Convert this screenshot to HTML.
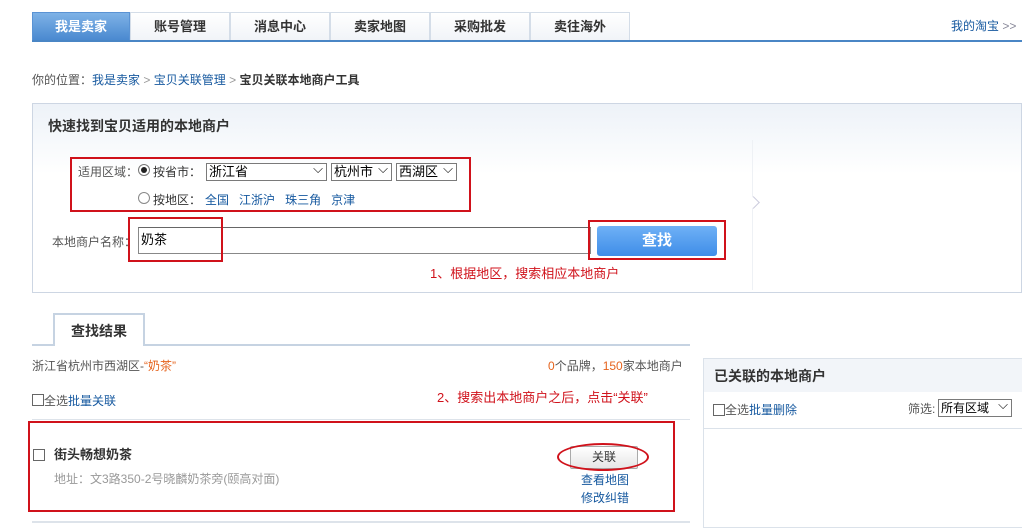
<!DOCTYPE html>
<html><head><meta charset="utf-8">
<style>
*{margin:0;padding:0;box-sizing:border-box}
body{width:1022px;height:525px;overflow:hidden;background:#fff;position:relative;font-family:"Liberation Sans","Noto Sans CJK SC","WenQuanYi Zen Hei",sans-serif;font-size:12px;color:#333}
.a{position:absolute;white-space:nowrap;line-height:14px}
.tab{position:absolute;top:12px;height:28px;width:100px;border:1px solid #d4dde8;border-bottom:none;background:linear-gradient(#fff,#f1f4f8);text-align:center;line-height:27px;font-size:13px;font-weight:bold;color:#333}
.lk{color:#15589f}
.red{border:2px solid #d0121b;position:absolute}
.sel{position:absolute;top:163px;height:18px;border:1px solid #7a7a7a;background:#fff;font-size:13px;line-height:16px;padding-left:2px;color:#000}
.sel:after{content:"⌵";position:absolute;right:3px;top:-3px;font-size:13px}
.cb{position:absolute;width:12px;height:12px;border:1px solid #666;background:#fff}
</style></head><body>
<div class="tab" style="left:32px;width:98px;background:linear-gradient(#7eb2e6,#4a89d0);color:#fff;border-color:#5a93d4">我是卖家</div>
<div class="tab" style="left:130px">账号管理</div>
<div class="tab" style="left:230px">消息中心</div>
<div class="tab" style="left:330px">卖家地图</div>
<div class="tab" style="left:430px">采购批发</div>
<div class="tab" style="left:530px">卖往海外</div>
<div class="a" style="left:32px;top:40px;width:990px;height:2px;background:#4a86c5"></div>
<div class="a lk" style="left:951px;top:19px;font-size:12px">我的淘宝 <span style="color:#889">&gt;&gt;</span></div>

<div class="a" style="left:32px;top:73px;color:#555">你的位置：<span class="lk">我是卖家</span> <span style="color:#999">&gt;</span> <span class="lk">宝贝关联管理</span> <span style="color:#999">&gt;</span> <b style="color:#333">宝贝关联本地商户工具</b></div>

<div class="a" style="left:32px;top:103px;width:990px;height:190px;border:1px solid #cdd6e3;background:linear-gradient(#edf2f8,#fff 70px)"></div>
<div class="a" style="left:752px;top:140px;width:1px;height:150px;background:#eef1f5"></div>
<div class="a" style="left:749px;top:198px;width:9px;height:9px;border-right:1px solid #ccd;border-top:1px solid #ccd;transform:rotate(45deg);background:#fff"></div>
<div class="a" style="left:48px;top:119px;font-size:14px;font-weight:bold;color:#333">快速找到宝贝适用的本地商户</div>

<div class="red" style="left:70px;top:157px;width:401px;height:55px"></div>
<div class="a" style="left:78px;top:165px;color:#555">适用区域：</div>
<div class="a" style="left:138px;top:164px;width:12px;height:12px;border:1px solid #777;border-radius:50%;background:#fff"><div style="margin:2px;width:6px;height:6px;border-radius:50%;background:#222"></div></div>
<div class="a" style="left:153px;top:165px">按省市：</div>
<div class="sel" style="left:206px;width:121px">浙江省</div>
<div class="sel" style="left:331px;width:61px">杭州市</div>
<div class="sel" style="left:396px;width:61px">西湖区</div>
<div class="a" style="left:138px;top:192px;width:12px;height:12px;border:1px solid #888;border-radius:50%;background:#fff"></div>
<div class="a" style="left:153px;top:193px">按地区：<span class="lk" style="margin-left:4px">全国</span>&nbsp;&nbsp;&nbsp;<span class="lk">江浙沪</span>&nbsp;&nbsp;&nbsp;<span class="lk">珠三角</span>&nbsp;&nbsp;&nbsp;<span class="lk">京津</span></div>

<div class="a" style="left:52px;top:235px;color:#555">本地商户名称：</div>
<div class="a" style="left:138px;top:227px;width:453px;height:27px;border:1px solid #888;border-top-color:#666;background:#fff;font-size:13px;padding:5px 0 0 2px;color:#000">奶茶</div>
<div class="red" style="left:128px;top:217px;width:95px;height:45px"></div>
<div class="a" style="left:597px;top:226px;width:120px;height:30px;border-radius:3px;background:linear-gradient(#6fb1f6,#3f8de8);color:#fff;font-size:15px;font-weight:bold;text-align:center;line-height:30px">查找</div>
<div class="red" style="left:588px;top:220px;width:138px;height:40px"></div>
<div class="a" style="left:430px;top:267px;color:#d0121b;font-size:13px">1、根据地区，搜索相应本地商户</div>

<div class="a" style="left:32px;top:344px;width:658px;height:2px;background:#c6d3e2"></div>
<div class="a" style="left:53px;top:313px;width:92px;height:33px;border:2px solid #c6d3e2;border-bottom:none;background:#fff;text-align:center;line-height:32px;font-size:14px;font-weight:bold">查找结果</div>
<div class="a" style="left:32px;top:359px;color:#555">浙江省杭州市西湖区-<span style="color:#e5631d">“奶茶”</span></div>
<div class="a" style="left:548px;top:359px;color:#555"><span style="color:#e5631d">0</span>个品牌，<span style="color:#e5631d">150</span>家本地商户</div>
<div class="cb" style="left:32px;top:394px"></div>
<div class="a" style="left:44px;top:394px;color:#555">全选<span class="lk">批量关联</span></div>
<div class="a" style="left:437px;top:391px;color:#d0121b;font-size:13px">2、搜索出本地商户之后，点击“关联”</div>
<div class="a" style="left:32px;top:419px;width:658px;height:1px;background:#dde3ea"></div>
<div class="red" style="left:28px;top:421px;width:647px;height:91px"></div>
<div class="cb" style="left:33px;top:449px"></div>
<div class="a" style="left:54px;top:448px;font-size:13px;font-weight:bold;color:#333">街头畅想奶茶</div>
<div class="a" style="left:54px;top:472px;color:#999">地址：文3路350-2号晓麟奶茶旁(颐高对面)</div>
<div class="a" style="left:570px;top:446px;width:68px;height:23px;border:1px solid #aaa;border-radius:2px;background:linear-gradient(#fff,#e6e6e6);text-align:center;line-height:21px;color:#333">关联</div>
<div class="a" style="left:557px;top:443px;width:92px;height:28px;border:2px solid #d0121b;border-radius:50%"></div>
<div class="a lk" style="left:581px;top:473px">查看地图</div>
<div class="a lk" style="left:581px;top:491px">修改纠错</div>
<div class="a" style="left:32px;top:521px;width:658px;height:2px;background:#dde3ea"></div>

<div class="a" style="left:703px;top:358px;width:330px;height:170px;border:1px solid #dbe2ea;background:#fff"></div>
<div class="a" style="left:704px;top:359px;width:320px;height:33px;background:#f2f5f9"></div>
<div class="a" style="left:714px;top:369px;font-size:14px;font-weight:bold;color:#333">已关联的本地商户</div>
<div class="cb" style="left:713px;top:404px"></div>
<div class="a" style="left:725px;top:403px;color:#555">全选<span class="lk">批量删除</span></div>
<div class="a" style="left:908px;top:402px;color:#555">筛选:</div>
<div class="sel" style="left:938px;top:399px;width:74px;font-size:12px">所有区域</div>
<div class="a" style="left:704px;top:428px;width:318px;height:1px;background:#dbe2ea"></div>
</body></html>
